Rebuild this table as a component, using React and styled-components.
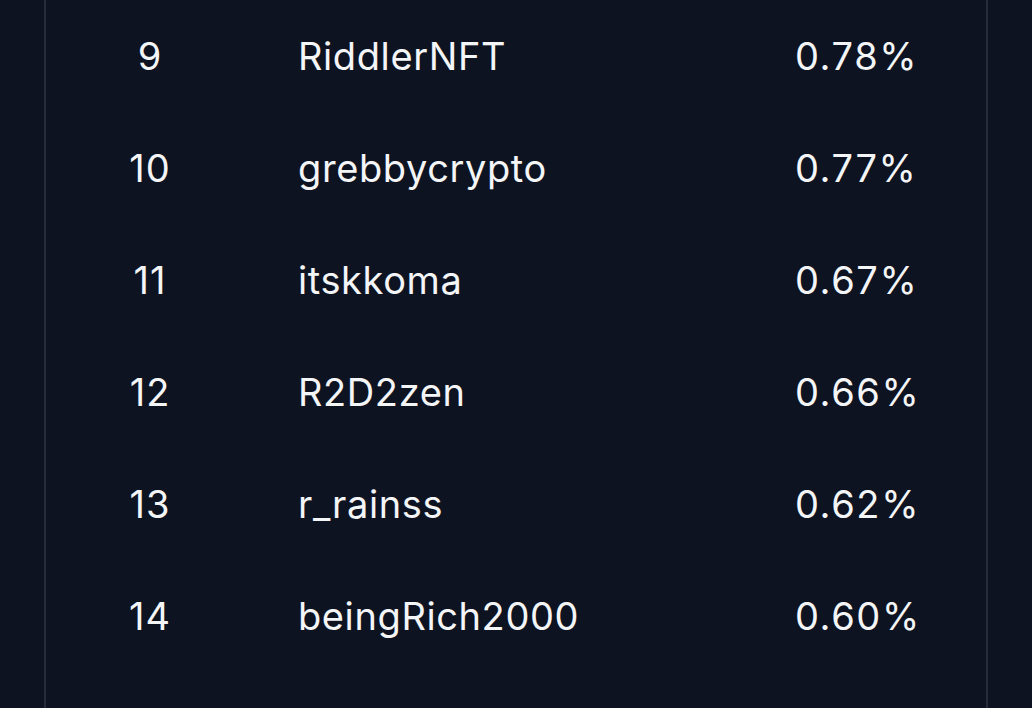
import React from "react";
import styled, { createGlobalStyle } from "styled-components";

const Global = createGlobalStyle`
  html, body { margin: 0; padding: 0; background: #0d1321; }
  body { font-family: Inter, "Noto Sans", sans-serif; color: #f4f5f7; }
`;

const Page = styled.div`
  width: 1032px;
  height: 708px;
  overflow: hidden;
  background: #0d1321;
  padding-left: 44px;
  box-sizing: border-box;
`;

const Panel = styled.div`
  width: 944px;
  height: 708px;
  box-sizing: border-box;
  border-left: 2px solid #262c3a;
  border-right: 2px solid #262c3a;
  background: #0d1321;
`;

const Row = styled.div`
  display: grid;
  grid-template-columns: 208px 541px 1fr;
  align-items: center;
  height: 112px;
  font-size: 38px;
  font-weight: 400;
  letter-spacing: 0.6px;
`;

const Rank = styled.div`
  text-align: center;
  letter-spacing: 1px;
`;

const Name = styled.div`
  padding-left: 44px;
`;

const Pct = styled.div`
  letter-spacing: 1.6px;
`;

const data = [
  [9, "RiddlerNFT", "0.78%"],
  [10, "grebbycrypto", "0.77%"],
  [11, "itskkoma", "0.67%"],
  [12, "R2D2zen", "0.66%"],
  [13, "r_rainss", "0.62%"],
  [14, "beingRich2000", "0.60%"],
];

export default function App() {
  return (
    <>
      <Global />
      <Page>
        <Panel>
          {data.map(([r, n, p]) => (
            <Row key={r}>
              <Rank>{r}</Rank>
              <Name>{n}</Name>
              <Pct>{p}</Pct>
            </Row>
          ))}
        </Panel>
      </Page>
    </>
  );
}
